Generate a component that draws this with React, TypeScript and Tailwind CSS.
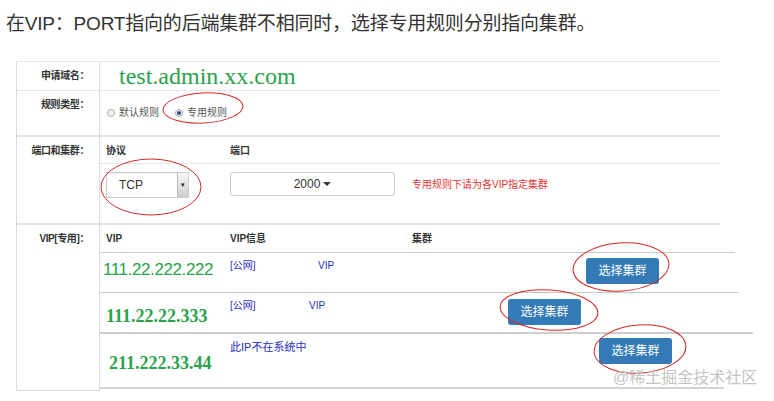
import React from "react";

const SANS = { fontFamily: '"Liberation Sans", "Noto Sans CJK SC", sans-serif' };
const SERIF = { fontFamily: '"Liberation Serif", "Noto Sans CJK SC", serif' };

function Label({ text }: { text: string }) {
  return (
    <div className="text-right text-[10px] font-bold leading-[14px] tracking-[-0.4px] text-[#333]">{text}</div>
  );
}

function PickButton() {
  return (
    <div className="flex h-[26px] w-[73px] items-center justify-center rounded-[3px] bg-[#337ab7] text-[12px] text-white">
      选择集群
    </div>
  );
}

function Radio({ checked }: { checked?: boolean }) {
  return (
    <span className="inline-flex h-[8px] w-[8px] items-center justify-center rounded-full border border-[#aaa] bg-[#f4f4f4]">
      {checked && <span className="h-[4px] w-[4px] rounded-full bg-[#2a4f8a]" />}
    </span>
  );
}

export default function App() {
  return (
    <div className="relative h-[401px] w-[774px] overflow-hidden bg-white" style={SANS}>
      <p className="pl-[6px] pt-[10px] text-[19px] leading-[28px] tracking-[-0.2px] text-[#333]">
        在VIP：PORT指向的后端集群不相同时，选择专用规则分别指向集群。
      </p>

      <div className="ml-[16px] mt-[23px] w-[704px] border-l border-[#ddd]">
        {/* 申请域名 */}
        <div className="flex h-[29px] border-t border-[#e6e6e6]">
          <div className="flex w-[83px] shrink-0 items-center justify-end border-r border-[#ddd] pr-[10px]">
            <Label text="申请域名：" />
          </div>
          <div className="flex items-center pl-[19px] text-[24px] leading-none text-[#2aa24b]" style={SERIF}>
            test.admin.xx.com
          </div>
        </div>

        {/* 规则类型 */}
        <div className="flex h-[45px] border-t border-[#e6e6e6]">
          <div className="w-[83px] shrink-0 border-r border-[#ddd] pr-[10px] pt-[7px]">
            <Label text="规则类型：" />
          </div>
          <div className="flex items-start gap-[4px] pl-[7px] pt-[15px] text-[10px] leading-[14px] text-[#555]">
            <span className="flex h-[14px] items-center"><Radio /></span>
            <span className="mr-[12px]">默认规则</span>
            <span className="flex h-[14px] items-center"><Radio checked /></span>
            <span>专用规则</span>
          </div>
        </div>

        {/* 端口和集群 */}
        <div className="flex h-[88px] border-t-2 border-[#e3e3e3]">
          <div className="w-[83px] shrink-0 border-r border-[#ddd] pr-[10px] pt-[7px]">
            <Label text="端口和集群：" />
          </div>
          <div className="flex-1">
            <div className="flex h-[27px] items-center border-b border-[#e8e8e8] text-[10px] font-bold text-[#333]">
              <span className="w-[130px] pl-[6px]">协议</span>
              <span>端口</span>
            </div>
            <div className="flex items-start pt-[8px]">
              <div className="w-[130px] pl-[6px]">
                <div className="flex h-[26px] w-[83px] border border-[#ccc] bg-white shadow-[inset_0_1px_2px_rgba(0,0,0,0.08)]">
                  <span className="flex-1 pl-[12px] text-[12px] leading-[24px] text-[#333]">TCP</span>
                  <span className="flex w-[11px] items-center justify-center border-l border-[#bbb] bg-linear-to-b from-[#f6f6f6] to-[#cfcfcf] text-[7px] text-[#222]">
                    ▾
                  </span>
                </div>
              </div>
              <div className="flex w-[182px] items-center">
                <div className="flex h-[24px] w-[165px] items-center justify-center gap-[3px] rounded-[3px] border border-[#ccc] text-[12px] text-[#333]">
                  2000
                  <span className="inline-block h-0 w-0 border-x-[4px] border-t-[4px] border-x-transparent border-t-[#333]" />
                </div>
              </div>
              <div className="flex h-[24px] items-center text-[10px] text-[#e53333]">专用规则下请为各VIP指定集群</div>
            </div>
          </div>
        </div>

        {/* VIP[专用] */}
        <div className="flex border-t-2 border-[#e3e3e3]">
          <div className="h-[166px] w-[83px] shrink-0 border-r border-b border-[#ddd] pr-[10px] pt-[7px]">
            <Label text="VIP[专用]：" />
          </div>
          <div className="flex-1">
            <div className="flex h-[28px] w-[635px] items-center border-b border-[#ccc] text-[10px] font-bold text-[#333]">
              <span className="w-[130px] pl-[6px]">VIP</span>
              <span className="w-[182px]">VIP信息</span>
              <span>集群</span>
            </div>

            <div className="flex h-[40px] w-[638px] items-start border-b border-[#c8c8c8]">
              <div className="w-[130px] pl-[3px] pt-[7px] text-[17px] leading-[20px] tracking-[-0.4px] text-[#2aa24b]">
                111.22.222.222
              </div>
              <div className="flex w-[356px] pt-[6px] text-[10px] leading-[14px] text-[#2c2cc4]">
                <span className="w-[88px]">[公网]</span>
                <span>VIP</span>
              </div>
              <div className="pt-[5px]"><PickButton /></div>
            </div>

            <div className="flex h-[41px] w-[653px] items-start border-b-2 border-[#cfcfcf]">
              <div className="w-[130px] pl-[6px] pt-[13px] text-[18px] font-bold leading-[20px] text-[#2aa24b]" style={SERIF}>
                111.22.22.333
              </div>
              <div className="flex w-[278px] pt-[6px] text-[10px] leading-[14px] text-[#2c2cc4]">
                <span className="w-[79px]">[公网]</span>
                <span>VIP</span>
              </div>
              <div className="pt-[6px]"><PickButton /></div>
            </div>

            <div className="flex h-[55px] w-[624px] items-start border-b-2 border-[#d4d4d4]">
              <div className="w-[130px] pl-[9px] pt-[19px] text-[18px] font-bold leading-[20px] text-[#2aa24b]" style={SERIF}>
                211.222.33.44
              </div>
              <div className="w-[369px] pt-[6px] text-[11px] leading-[14px] text-[#2c2cc4]">此IP不在系统中</div>
              <div className="pt-[4px]"><PickButton /></div>
            </div>
          </div>
        </div>
      </div>

      {/* red hand-drawn annotation ellipses */}
      <svg className="pointer-events-none absolute inset-0" width="774" height="401" viewBox="0 0 774 401">
        <g fill="none" stroke="#d42a2a" strokeWidth="1">
          <ellipse cx="203" cy="108" rx="40" ry="15" transform="rotate(-3 203 108)" />
          <ellipse cx="151" cy="187" rx="50" ry="28" />
          <ellipse cx="621" cy="267" rx="48" ry="24" transform="rotate(-4 621 267)" />
          <ellipse cx="549" cy="310" rx="49" ry="20" transform="rotate(4 549 310)" />
          <ellipse cx="640" cy="349" rx="46" ry="24" transform="rotate(-4 640 349)" />
        </g>
      </svg>

      <div className="absolute left-[613px] top-[368px] text-[16px] leading-[20px] text-[#c4c4c4]">@稀土掘金技术社区</div>
    </div>
  );
}
